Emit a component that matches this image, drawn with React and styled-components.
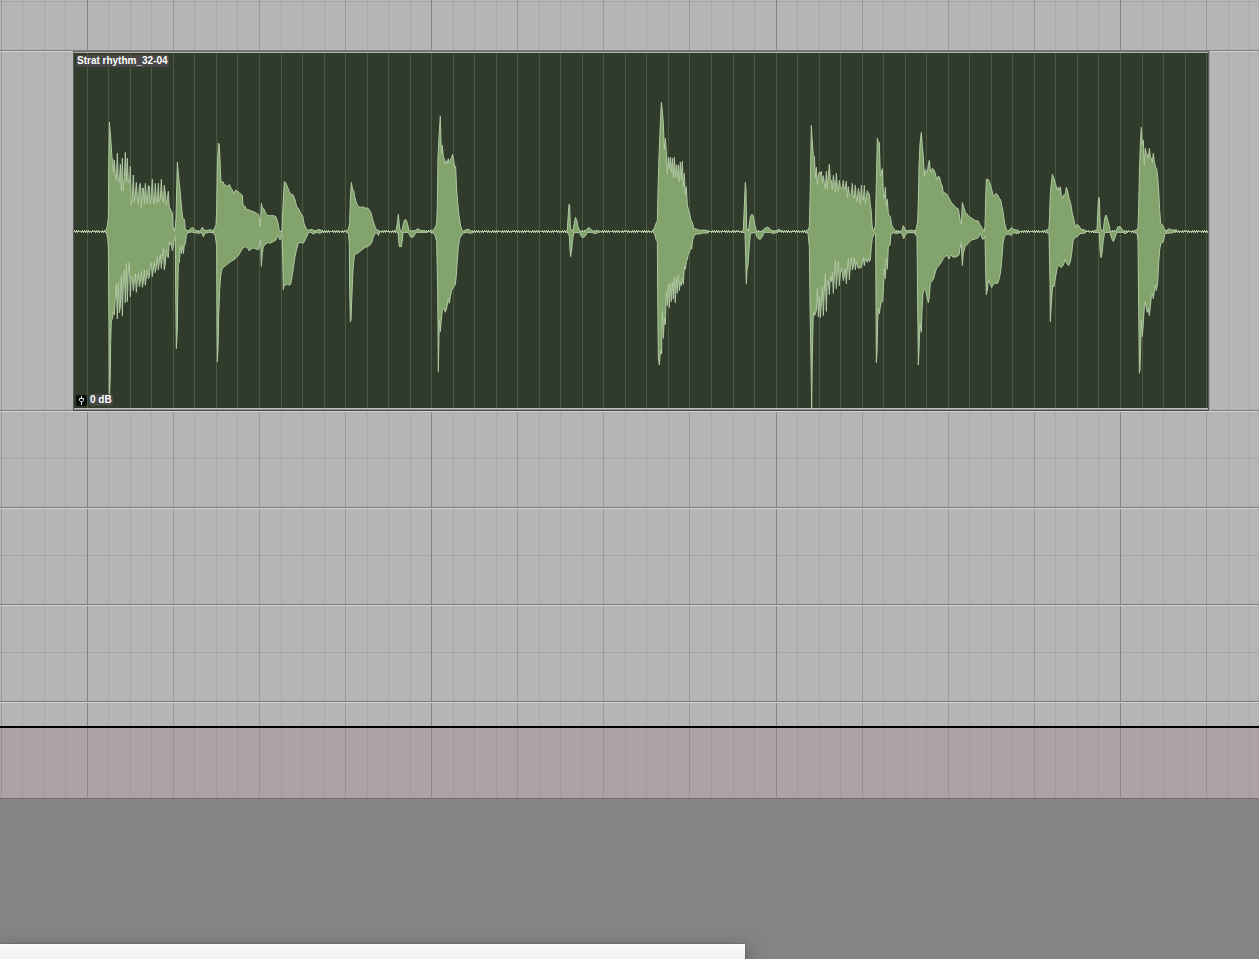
import React, { useState } from "react";
import styled, { createGlobalStyle, css } from "styled-components";

const GlobalStyle = createGlobalStyle`
  * {
    box-sizing: border-box;
  }

  body {
    margin: 0;
    background: #848484;
    font-family: "Liberation Sans", Arial, sans-serif;
  }
`;

const Page = styled.div`
  display: flex;
  flex-direction: column;
  min-height: 100vh;
  overflow: hidden;
`;

const Arranger = styled.main`
  position: relative;
  background: #b5b5b5;
`;

const Grid = styled.svg`
  position: absolute;
  top: 0;
  left: 0;
  width: 100%;
  height: 100%;
  pointer-events: none;
`;

const Lane = styled.section`
  position: relative;
  display: flex;
  height: ${props => props.$height}px;
  box-shadow: inset 0 1px #d2d2d2, inset 0 -1px #7c7c7c;

  ${props =>
    props.$edge === "first" &&
    css`
      box-shadow: inset 0 -1px #7c7c7c;
    `}

  ${props =>
    props.$edge === "last" &&
    css`
      box-shadow: inset 0 1px #d2d2d2;
    `}
`;

const Divider = styled.hr`
  flex: 1;
  height: 1px;
  margin: ${props => props.$top}px 0 0;
  border: 0;
  background: rgba(0, 0, 0, 0.07);
`;

const MasterLane = styled.section`
  position: relative;
  height: 73px;
  border-top: 2px solid #000;
  border-bottom: 1px solid #776d70;
  background: rgba(154, 120, 130, 0.3);
`;

const Clip = styled.article`
  position: relative;
  flex: 1;
  display: flex;
  margin: 0 50px 0 73px;
  border: 1px solid #5a5a5a;
  border-top-color: #6f6f6f;
  border-bottom-color: #4a4a4a;
  background: #8c8c8c;
  padding-bottom: 1px;
  box-shadow: 1px 0 #a0a0a0;
`;

const ClipBody = styled.div`
  position: relative;
  flex: 1;
  display: flex;
  flex-direction: column;
  justify-content: space-between;
  align-items: flex-start;
  padding: 2px;
  border-top: 1px solid #b4b4b4;
  border-bottom: 1px solid #c0c0c0;
  background: #313b2c;
`;

const Waveform = styled.svg`
  position: absolute;
  top: 0;
  left: 0;
  width: 100%;
  height: 100%;
`;

const Outline = styled.path`
  fill: #82a46c;
  stroke: #b0c8a2;
  stroke-width: 1px;
  stroke-linejoin: bevel;
  vector-effect: non-scaling-stroke;
`;

const Noise = styled.path`
  fill: #b0c8a2;
`;

const Tag = styled.span`
  position: relative;
  padding: 0 1px;
  border-radius: 2px;
  background: rgba(74, 74, 74, 0.9);
  color: #fff;
  font-size: 10px;
  font-weight: bold;
  line-height: 12px;
  white-space: nowrap;
`;

const GainRow = styled.div`
  position: relative;
  display: flex;
  align-items: center;
  gap: 2px;
`;

const GainButton = styled.button`
  display: flex;
  width: 11px;
  height: 11px;
  padding: 0;
  border: 0;
  border-radius: 2px;
  background: #0b0d0a;
  color: #e4e4e4;
`;

const Panel = styled.aside`
  width: 745px;
  max-width: 100%;
  height: 15px;
  margin-top: auto;
  background: linear-gradient(#fafafa, #f1f1f1);
  box-shadow: 0 0 1px rgba(0, 0, 0, 0.5), 0 8px 20px rgba(0, 0, 0, 0.5);
`;

// Timeline: 16 steps to the bar, first full bar starts at BAR_X
const STEP = 21.525;
const BAR_X = 87.3;
const CLIP_X = 74;

const gridLines = Array.from({ length: 180 }, (_, i) => {
  const step = i - 4;
  let opacity = 0.07;
  if (step % 4 === 0) opacity = 0.15;
  if (step % 16 === 0) opacity = 0.26;
  return { x: Math.floor(BAR_X + step * STEP), opacity };
});

// Peaks are stored at three units per pixel, "start" is the offset of the
// transient in the clip, zero crossing at ZERO.
const ZERO = 424;
const LENGTH = 3402;

const transients = [
  {
    start: -12,
    top:
      "106,424 109,418 112,408 115,385 116,250 118,96 121,130 124,170 126,203 128,206 130,247 133,210 136,258 139,270 142,190 145,278 148,276 151,223 154,304 157,205 160,302 163,265 166,187 169,275 172,205 175,278 179,278 181,229 184,344 187,325 190,255 193,335 196,315 199,277 202,320 205,343 208,290 211,280 214,355 217,294 220,294 223,342 226,280 229,320 232,340 235,286 238,290 241,342 244,310 247,267 250,330 253,343 256,280 259,330 262,338 265,280 268,335 271,325 274,268 277,320 280,338 283,286 286,310 289,345 292,325 295,304 298,355 301,356 304,365 307,367 309,410 313,424 316,410 318,385 320,300 322,216 325,250 328,280 331,310 334,345 337,375 340,390 343,388 346,418 355,424 360,418 364,414 368,412 373,418 380,423 390,424 397,412 402,420 410,422 420,419 430,422",
    bottom:
      "106,424 110,432 113,445 115,470 117,700 118,942 121,850 122,760 124,690 127,688 130,665 133,675 136,620 139,583 142,686 145,577 148,668 151,650 154,557 157,677 160,580 163,540 166,638 169,520 172,635 175,540 178,517 181,620 184,558 187,560 190,602 193,575 196,550 199,607 202,570 205,550 208,590 211,575 214,545 217,592 220,575 223,540 226,586 229,560 232,540 235,566 238,560 241,530 244,518 247,560 250,540 253,517 256,548 259,530 262,500 265,540 268,515 271,492 274,535 277,500 280,475 283,540 286,520 289,478 292,500 295,503 298,453 301,465 304,460 307,482 310,470 313,445 316,440 317,600 319,776 322,720 323,620 325,520 328,518 331,470 334,490 337,465 340,491 343,465 346,462 349,435 354,428 365,426 385,430 395,428 400,440 405,430 415,427 430,428"
  },
  {
    start: -12,
    top:
      "430,422 435,412 438,405 440,360 442,240 445,159 448,165 451,235 453,275 460,276 463,286 468,285 473,290 478,283 482,292 487,300 492,310 497,300 502,303 507,307 512,312 517,316 519,345 524,348 530,358 537,360 545,363 555,367 562,371 566,374 569,395 571,410 574,340 577,353 582,357 587,370 592,376 598,377 612,377 618,381 622,392 625,405 628,424 636,424 638,370 641,310 643,274 648,280 653,292 658,305 663,313 669,314 675,330 680,350 687,358 693,372 698,377 702,400 707,412 713,422 720,419 727,418 732,424 740,421 748,418 758,424",
    bottom:
      "430,430 436,437 440,470 441,700 442,815 444,780 446,680 449,600 452,560 455,540 460,532 468,526 475,520 485,513 495,507 500,500 505,497 515,480 522,470 527,471 532,473 538,483 543,476 550,474 556,476 563,479 567,477 570,450 572,448 574,529 577,490 580,470 586,463 594,457 600,460 610,455 618,450 622,436 627,445 630,450 633,440 636,430 638,500 640,599 643,583 648,586 652,582 658,586 662,583 666,560 670,535 675,500 680,478 685,460 693,457 700,460 705,450 710,440 715,428 722,427 730,432 740,427 750,430 758,426"
  },
  {
    start: 768,
    top:
      "48,424 55,418 59,400 61,330 64,277 68,300 71,301 74,320 78,334 82,345 86,350 92,352 98,350 105,354 113,354 118,360 123,368 127,385 132,402 137,415 142,420 148,422",
    bottom:
      "48,426 55,430 58,460 59,600 61,695 63,690 66,610 69,540 73,495 80,491 88,486 95,480 105,472 113,470 120,465 126,455 130,440 136,430 141,428 145,436 149,428"
  },
  {
    start: 768,
    top:
      "195,424 199,418 202,398 205,373 208,405 211,424 217,420 220,400 224,390 228,389 232,400 237,420 245,424 258,421 262,416 272,421 285,423",
    bottom:
      "195,426 204,426 206,450 208,470 214,470 217,450 219,427 235,427 240,438 246,443 252,438 258,427 290,427"
  },
  {
    start: 768,
    top:
      "300,421 310,422 316,410 320,402 322,350 324,200 327,140 331,78 334,190 337,166 340,200 343,207 346,222 349,212 352,220 355,206 358,218 361,210 364,205 368,193 371,210 374,232 377,229 380,300 383,335 386,370 389,390 392,408 395,418 400,424 408,419 416,418 422,422",
    bottom:
      "300,427 312,430 316,438 320,455 323,600 325,845 327,740 328,690 331,725 334,690 337,660 342,655 346,667 350,655 355,625 358,640 361,620 365,600 370,593 376,583 379,555 382,510 385,470 389,445 393,438 400,430 410,427 422,430 430,427"
  },
  {
    start: 768,
    top:
      "708,424 712,420 715,370 717,343 719,345 721,415 728,424 732,405 736,382 740,390 744,410 750,424 765,424 770,418 776,412 782,418 790,424 806,422",
    bottom:
      "708,426 716,430 718,440 720,480 722,500 725,480 728,450 731,428 750,428 754,440 760,443 766,438 772,427 785,427 795,431 805,427"
  },
  {
    start: 1698,
    top:
      "38,424 44,412 50,395 52,393 54,300 57,200 59,150 61,100 64,37 67,62 70,100 73,178 76,145 79,185 82,253 85,202 88,236 91,202 94,247 97,205 100,262 103,202 106,262 109,224 112,262 115,225 118,276 121,217 124,270 127,214 130,291 133,250 136,315 139,290 142,345 145,357 149,370 152,388 155,393 159,405 162,418 168,416 175,420 185,421 192,420 205,423",
    bottom:
      "38,426 44,432 49,452 52,455 53,600 55,805 58,825 60,800 62,780 65,792 66,700 67,665 70,745 73,685 76,704 79,605 82,647 85,582 88,653 91,580 94,635 97,577 100,628 103,562 106,638 109,562 112,610 115,553 118,602 121,575 124,587 127,565 130,583 133,530 136,538 139,515 142,508 145,492 149,485 152,470 155,478 158,450 162,438 168,432 178,432 190,429 205,429"
  },
  {
    start: 1698,
    top:
      "305,424 310,420 312,370 316,277 318,300 320,415 325,424 328,405 331,380 336,373 340,378 345,405 349,424 368,424 374,415 382,411 390,416 396,424 410,422 416,418 424,422",
    bottom:
      "305,427 315,427 317,500 319,581 321,540 324,525 327,480 331,430 347,427 350,440 356,447 361,448 368,438 372,427 392,427 400,431 410,427"
  },
  {
    start: 2178,
    top:
      "15,424 24,420 28,410 30,330 32,220 34,106 36,140 40,200 43,199 46,262 49,232 52,284 55,255 58,247 61,252 64,244 67,277 70,257 73,280 76,297 79,244 82,298 85,255 88,223 91,270 94,271 97,300 100,256 103,278 106,307 109,250 112,290 115,304 118,271 121,292 127,295 130,271 133,300 136,298 139,274 142,323 145,290 148,310 151,313 154,310 157,280 160,322 163,325 166,285 169,325 172,335 175,295 178,310 181,344 184,286 187,330 190,330 193,286 196,340 199,320 202,302 205,310 208,311 211,345 214,365 216,405 220,424 226,410 229,280 232,145 235,155 238,158 241,258 244,250 247,236 250,310 253,325 256,292 259,350 262,328 265,370 268,378 271,380 275,405 280,414 287,424 300,425 307,418 310,407 315,416 320,424 335,420 345,424",
    bottom:
      "15,427 24,430 28,470 30,640 33,820 35,954 37,800 40,665 43,677 46,673 49,660 52,596 55,680 58,620 61,683 64,640 67,590 70,677 73,600 76,550 79,664 82,570 85,575 88,614 91,560 94,575 97,547 100,610 103,560 106,511 109,596 112,550 115,514 118,587 121,550 124,535 127,550 130,572 133,555 136,535 139,581 142,540 145,505 148,569 151,530 154,503 157,540 160,530 163,503 166,540 169,515 175,535 184,532 190,502 193,527 196,505 202,517 205,505 208,515 211,508 214,470 217,445 222,432 227,430 228,650 229,818 231,790 233,700 235,655 238,671 241,650 244,635 248,634 250,600 253,535 256,566 259,505 262,538 265,470 270,465 273,433 280,428 290,431 298,428 306,430 311,446 317,432 325,428 340,428 346,432"
  },
  {
    start: 2178,
    top:
      "345,424 349,415 353,395 355,330 357,230 360,160 364,127 367,170 370,200 373,258 376,238 379,248 382,247 385,225 388,211 391,240 394,247 397,235 402,240 406,250 410,270 415,258 419,262 423,280 427,288 430,310 435,308 440,312 445,320 450,330 455,340 460,343 465,350 470,354 475,357 478,375 481,395 484,403 487,338 492,353 496,368 500,370 505,378 513,383 520,388 527,392 535,393 540,405 547,415 552,424 555,410 557,330 559,268 565,268 570,280 575,298 580,318 585,315 588,310 593,315 598,325 602,330 606,350 610,370 614,400 619,418 624,424 630,418 635,412 639,418 655,421",
    bottom:
      "346,432 351,440 353,640 355,825 357,780 360,700 364,727 366,660 369,610 373,596 377,602 381,620 385,638 388,620 391,580 395,575 400,568 405,550 410,535 418,525 425,515 430,505 436,498 442,497 447,507 453,495 460,502 470,500 477,495 480,475 484,458 487,527 490,490 495,470 500,465 508,455 515,450 525,447 535,443 541,430 548,448 552,446 555,440 557,540 559,614 562,600 565,571 570,580 575,593 580,582 587,580 593,580 598,565 602,545 606,500 609,460 613,440 620,433 627,432 633,437 640,428 655,431"
  },
  {
    start: 2778,
    top:
      "135,424 147,415 149,370 151,310 154,280 157,253 161,262 166,280 172,300 175,292 178,303 181,290 184,315 188,325 191,315 196,312 199,292 203,303 207,325 212,340 217,370 222,390 226,412 231,403 237,408 243,418 255,420",
    bottom:
      "135,427 147,430 150,580 151,695 154,640 158,588 162,590 166,565 172,532 178,525 183,533 190,525 196,508 200,520 206,527 211,515 215,490 219,455 224,442 232,440 240,431 255,429"
  },
  {
    start: 2778,
    top:
      "280,424 291,420 294,350 296,322 298,325 301,415 309,424 311,410 314,385 318,375 322,385 327,405 331,424 348,424 353,411 360,409 366,418 372,424",
    bottom:
      "280,427 298,427 300,480 303,503 306,490 310,450 314,427 330,427 335,445 340,455 346,440 350,427 370,427 375,432 380,427"
  },
  {
    start: 2778,
    top:
      "400,424 410,420 414,412 416,350 418,260 421,160 424,112 427,165 430,150 433,227 436,175 439,190 442,195 445,205 448,175 451,200 454,205 457,217 460,190 463,215 467,232 470,235 473,260 476,300 479,360 482,400 488,405 493,416 498,424 506,416 515,420 530,420",
    bottom:
      "400,427 411,430 414,450 416,650 418,850 420,840 422,770 424,690 427,740 430,700 433,650 436,637 439,655 442,667 445,655 448,677 451,650 454,620 457,612 460,626 463,605 466,585 469,602 473,580 476,520 479,480 482,462 490,455 495,430 505,430 520,428"
  }
];

const outline = ({ top, bottom }) =>
  `M${top} L${bottom
    .split(" ")
    .reverse()
    .join(" ")}Z`;

// quiet noise between the notes: a solid zero line with specks on both sides
const noiseFloor = () => {
  let d = `M0,${ZERO - 1}h${LENGTH}v3h-${LENGTH}z`;
  for (let x = 0, i = 0; x < LENGTH; x += 6, i += 1) {
    if (i % 5 !== 3) d += `M${x},${ZERO - 4}h3v3h-3z`;
    if (i % 7 !== 2) d += `M${x + 3},${ZERO + 2}h3v3h-3z`;
  }
  return d;
};

const GridLines = () => (
  <Grid aria-hidden="true">
    {gridLines.map(line => (
      <rect
        key={line.x}
        x={line.x}
        width="1"
        height="100%"
        fill="#000"
        fillOpacity={line.opacity}
      />
    ))}
  </Grid>
);

const ClipGrid = () => (
  <Grid aria-hidden="true">
    {gridLines.map(line => (
      <rect
        key={line.x}
        x={line.x - CLIP_X}
        width="1"
        height="100%"
        fill="#4a583f"
      />
    ))}
  </Grid>
);

const FaderIcon = () => (
  <svg width="11" height="11" viewBox="0 0 11 11" fill="none">
    <path d="M5.5 1V4M5.5 7V10" stroke="currentColor" />
    <path d="M3.5 3.5H7.5V5.5L6.5 6.5H4.5L3.5 5.5Z" stroke="currentColor" />
  </svg>
);

const AudioClip = ({ name }) => {
  const [gain, setGain] = useState(0);

  return (
    <Clip>
      <ClipBody>
        <ClipGrid />
        <Waveform
          viewBox={`0 -111 ${LENGTH} 1065`}
          preserveAspectRatio="none"
          role="img"
          aria-label="Waveform"
        >
          <Noise d={noiseFloor()} />
          {transients.map(item => (
            <Outline
              key={item.start + item.top.slice(0, 8)}
              d={outline(item)}
              transform={`translate(${item.start} 0)`}
            />
          ))}
        </Waveform>
        <Tag>{name}</Tag>
        <GainRow>
          <GainButton
            type="button"
            aria-label="Reset clip gain"
            onClick={() => setGain(0)}
          >
            <FaderIcon />
          </GainButton>
          <Tag>{gain} dB</Tag>
        </GainRow>
      </ClipBody>
    </Clip>
  );
};

const App = () => (
  <Page>
    <GlobalStyle />
    <Arranger>
      <GridLines />
      <Lane $height={51} $edge="first">
        <Divider $top={1} />
      </Lane>
      <Lane $height={360}>
        <AudioClip name="Strat rhythm_32-04" />
      </Lane>
      <Lane $height={97}>
        <Divider $top={47} />
      </Lane>
      <Lane $height={97}>
        <Divider $top={47} />
      </Lane>
      <Lane $height={97}>
        <Divider $top={47} />
      </Lane>
      <Lane $height={24} $edge="last" />
      <MasterLane />
    </Arranger>
    <Panel />
  </Page>
);

export default App;
